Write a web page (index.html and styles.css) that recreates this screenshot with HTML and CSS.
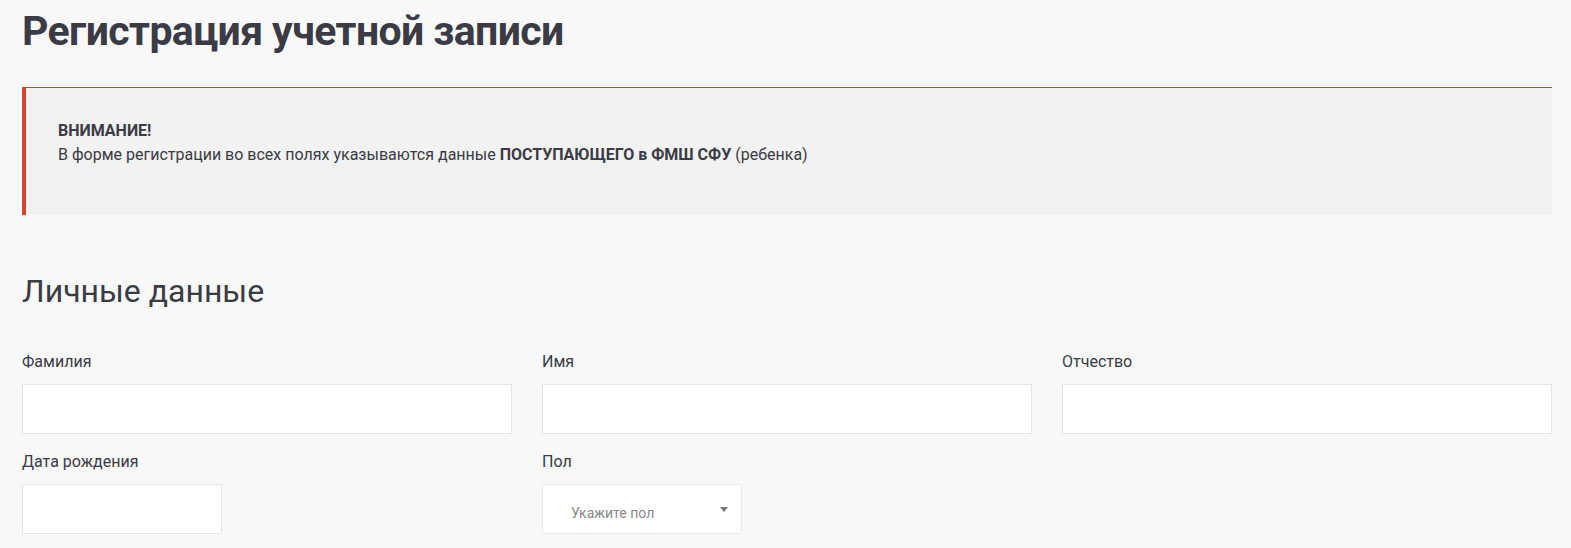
FILE: index.html
```html
<!DOCTYPE html>
<html lang="ru">
<head>
<meta charset="utf-8">
<title>Регистрация учетной записи</title>
<link rel="stylesheet" href="styles.css">
</head>
<body>
<main class="page">
  <h1 class="title">Регистрация учетной записи</h1>
  <div class="alert">
    <p><strong>ВНИМАНИЕ!</strong><br>В форме регистрации во всех полях указываются данные <strong>ПОСТУПАЮЩЕГО в ФМШ СФУ</strong> (ребенка)</p>
  </div>
  <h2 class="section-title">Личные данные</h2>
  <div class="form-grid">
    <div class="field">
      <label class="label">Фамилия</label>
      <input class="input" type="text">
    </div>
    <div class="field">
      <label class="label">Имя</label>
      <input class="input" type="text">
    </div>
    <div class="field">
      <label class="label">Отчество</label>
      <input class="input" type="text">
    </div>
    <div class="field">
      <label class="label">Дата рождения</label>
      <input class="input input-short" type="text">
    </div>
    <div class="field">
      <label class="label">Пол</label>
      <div class="select">
        <span class="select-placeholder">Укажите пол</span>
        <span class="select-arrow"></span>
      </div>
    </div>
  </div>
</main>
</body>
</html>
```

FILE: styles.css
```css
html, body {
  margin: 0;
  padding: 0;
  background: #f8f8f8;
}
body {
  font-family: Roboto, "Liberation Sans", sans-serif;
  color: #3a3b44;
}
.page {
  padding: 0 19px 0 22px;
}
.title {
  margin: 0;
  padding-top: 6px;
  font-family: Roboto, "Noto Sans", sans-serif;
  font-weight: 700;
  font-size: 41px;
  line-height: 50px;
  letter-spacing: -0.6px;
  color: #3a3b44;
}
.alert {
  margin-top: 31px;
  background: #f2f2f2;
  border-top: 1px solid #d9432a;
  border-left: 4px solid #d9432a;
  padding: 31px 32px 48px;
}
.alert p {
  margin: 0;
  font-size: 16px;
  line-height: 24px;
  color: #3a3b44;
}
.alert strong {
  font-weight: 700;
}
.section-title {
  margin: 56px 0 0;
  font-weight: 400;
  font-size: 32px;
  line-height: 40px;
  color: #3a3b44;
}
.form-grid {
  margin-top: 40px;
  display: grid;
  grid-template-columns: repeat(3, 1fr);
  column-gap: 30px;
  row-gap: 17px;
}
.field {
  display: flex;
  flex-direction: column;
}
.label {
  font-size: 16px;
  line-height: 22px;
  margin-bottom: 11px;
  color: #3a3b44;
}
.input {
  box-sizing: border-box;
  height: 50px;
  width: 100%;
  margin: 0;
  background: #fff;
  border: 1px solid #e5e5e5;
  border-radius: 0;
  outline: none;
}
.input-short {
  width: 200px;
}
.select {
  box-sizing: border-box;
  width: 200px;
  height: 50px;
  background: #fff;
  border: 1px solid #e8e8e8;
  border-radius: 3px;
  display: flex;
  align-items: center;
  justify-content: space-between;
  padding: 7px 13px 0 28px;
}
.select-placeholder {
  font-size: 14px;
  color: #888;
}
.select-arrow {
  width: 0;
  height: 0;
  border-left: 4px solid transparent;
  border-right: 4px solid transparent;
  border-top: 5px solid #777;
  margin-bottom: 7px;
}
```
